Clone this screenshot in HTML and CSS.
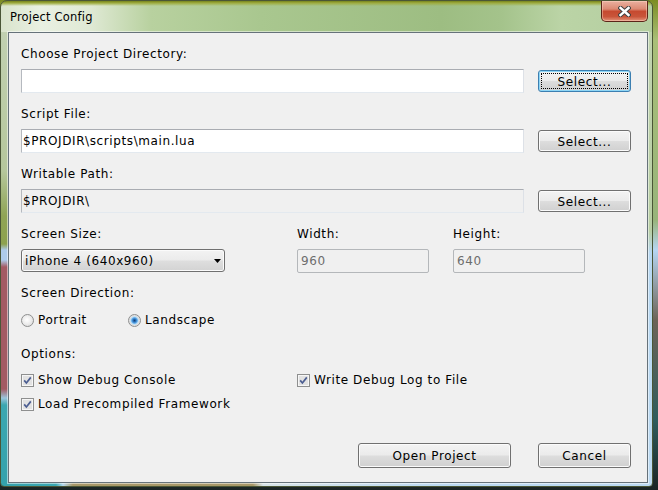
FILE: index.html
```
<!DOCTYPE html>
<html lang="en">
<head>
<meta charset="UTF-8">
<title>Project Config</title>
<link rel="stylesheet" href="styles.css">
</head>
<body>
    <div class="window">
        <div class="titlebar">
            <span class="title">Project Config</span>
            <button class="close-btn" type="button">
                <svg width="13" height="11" viewBox="0 0 13 11">
                    <path d="M2.5 2 L10.5 9 M10.5 2 L2.5 9" stroke="#404040" stroke-width="4.4" stroke-linecap="square"/>
                    <path d="M2.5 2 L10.5 9 M10.5 2 L2.5 9" stroke="#ffffff" stroke-width="2.4" stroke-linecap="square"/>
                </svg>
            </button>
        </div>
        <div class="client">
            <div class="field">
                <div class="label">Choose Project Directory:</div>
                <div class="path-row">
                    <input class="text-box" type="text" value="">
                    <button class="btn btn-default" type="button">Select...</button>
                </div>
            </div>
            <div class="field">
                <div class="label">Script File:</div>
                <div class="path-row">
                    <input class="text-box" type="text" value="$PROJDIR\scripts\main.lua">
                    <button class="btn" type="button">Select...</button>
                </div>
            </div>
            <div class="field">
                <div class="label">Writable Path:</div>
                <div class="path-row">
                    <input class="text-box read-only" type="text" value="$PROJDIR\" readonly>
                    <button class="btn" type="button">Select...</button>
                </div>
            </div>

            <div class="size-grid">
                <div class="label">Screen Size:</div>
                <div class="label">Width:</div>
                <div class="label">Height:</div>
                <div class="combo">
                    <span>iPhone 4 (640x960)</span>
                    <svg width="7" height="4" viewBox="0 0 7 4"><path d="M0 0 H7 L3.5 4 Z" fill="#000"/></svg>
                </div>
                <input class="num-box" type="text" value="960" disabled>
                <input class="num-box" type="text" value="640" disabled>
            </div>

            <div class="label">Screen Direction:</div>
            <div class="radio-row">
                <div class="radio-option"><span class="radio"></span>Portrait</div>
                <div class="radio-option"><span class="radio checked"></span>Landscape</div>
            </div>

            <div class="label options-label">Options:</div>
            <div class="options-grid">
                <div class="check-option">
                    <svg class="check" width="13" height="13" viewBox="0 0 13 13">
                        <rect x="0.5" y="0.5" width="12" height="12" fill="#f6f6f6" stroke="#8e8f8f"/>
                        <rect x="2" y="2" width="9" height="9" fill="#e2e2e2"/>
                        <path d="M3.2 6.4 L5.4 9 L9.8 3.4" fill="none" stroke="#4c5e92" stroke-width="1.7"/>
                    </svg>
                    Show Debug Console
                </div>
                <div class="check-option">
                    <svg class="check" width="13" height="13" viewBox="0 0 13 13">
                        <rect x="0.5" y="0.5" width="12" height="12" fill="#f6f6f6" stroke="#8e8f8f"/>
                        <rect x="2" y="2" width="9" height="9" fill="#e2e2e2"/>
                        <path d="M3.2 6.4 L5.4 9 L9.8 3.4" fill="none" stroke="#4c5e92" stroke-width="1.7"/>
                    </svg>
                    Write Debug Log to File
                </div>
                <div class="check-option">
                    <svg class="check" width="13" height="13" viewBox="0 0 13 13">
                        <rect x="0.5" y="0.5" width="12" height="12" fill="#f6f6f6" stroke="#8e8f8f"/>
                        <rect x="2" y="2" width="9" height="9" fill="#e2e2e2"/>
                        <path d="M3.2 6.4 L5.4 9 L9.8 3.4" fill="none" stroke="#4c5e92" stroke-width="1.7"/>
                    </svg>
                    Load Precompiled Framework
                </div>
            </div>

            <div class="actions">
                <button class="btn btn-large btn-open" type="button">Open Project</button>
                <button class="btn btn-large" type="button">Cancel</button>
            </div>
        </div>
    </div>
</body>
</html>
```

FILE: styles.css
```
body {
    margin: 0;
    font-family: "DejaVu Sans", sans-serif;
    font-size: 12px;
    letter-spacing: 0.6px;
    color: #000000;
    background: linear-gradient(to bottom, #7c8c22 0, #a9bf78 40px, #98b47a 220px, #b6d6f2 250px, #6c6458 320px, #2f5c5c 420px, #1a2424 490px);
    height: 490px;
    overflow: hidden;
}
.window {
    width: 653px;
    height: 487px;
    box-sizing: border-box;
    border: 1px solid #4a5636;
    border-radius: 7px 7px 4px 4px;
    padding: 0 4px 3px 7px;
    display: flex;
    flex-direction: column;
    background:
        linear-gradient(to bottom, #76831c 0, #9eac3e 2px, rgba(170, 190, 110, 0) 5px) left top / 100% 6px no-repeat,
        linear-gradient(to right, #d9e4cc 0, #e9f0e2 40px, #dfe9d4 90px, #b8d19f 150px, #a9c78f 260px, #9dbd82 440px, #a4c38b 500px, #bbd4a6 560px, #b4cea0 651px) left top / 100% 31px no-repeat,
        linear-gradient(to bottom, #c4d3b6 0, #b5c79c 170px, #8fa455 215px, #8da24e 243px, #aecbea 249px, #aecbea 259px, #a35a63 266px, #a35a63 388px, #9cc4dc 397px, #3ba7b0 404px, #34a2ac 487px) left top / 8px 100% no-repeat,
        linear-gradient(to bottom, #c2d5b2 0, #b9cfa4 230px, #b8d8f2 252px, #bcdaf2 487px) right top / 5px 100% no-repeat,
        linear-gradient(to right, #36a2ac 0, #3aa8b2 55px, #b6d8ee 62px, #a89868 72px, #a89868 252px, #d8e4e8 262px, #bcdaf2 440px, #bcdaf2 653px) left bottom / 100% 4px no-repeat;
}
.titlebar {
    height: 31px;
    display: flex;
    align-items: flex-start;
    flex-shrink: 0;
}
.title {
    font-size: 11.5px;
    letter-spacing: 0.2px;
    line-height: 14px;
    padding: 9px 0 0 2px;
}
.close-btn {
    margin-left: auto;
    width: 47px;
    height: 21px;
    padding: 0;
    border: 1px solid #5b2418;
    border-top: none;
    border-radius: 0 0 5px 5px;
    background: linear-gradient(to bottom, #eab0a0 0, #dc8a74 40%, #c64a30 52%, #c9553a 78%, #e3937a 100%);
    box-shadow: inset 0 0 0 1px rgba(255, 220, 200, 0.45);
    display: flex;
    align-items: center;
    justify-content: center;
}
.client {
    flex: 1;
    background-color: #f0f0f0;
    border: 1px solid #66727a;
    box-shadow: 0 0 0 1px rgba(255, 255, 255, 0.5);
    padding: 13px 16px 0 12px;
    display: flex;
    flex-direction: column;
}
.label {
    height: 16px;
    line-height: 16px;
    white-space: nowrap;
}
.field {
    margin-bottom: 13px;
}
.path-row {
    display: flex;
    align-items: center;
    gap: 14px;
    height: 24px;
    margin-top: 7px;
}
input {
    font: inherit;
    letter-spacing: inherit;
    outline: none;
    margin: 0;
}
.text-box {
    flex: 1;
    min-width: 0;
    height: 24px;
    box-sizing: border-box;
    border: 1px solid;
    border-color: #a9acb2 #dde1e7 #e3e9ef #b5b9bf;
    background-color: #ffffff;
    padding: 0 1px;
    color: #000000;
}
.text-box.read-only {
    background-color: #f0f0f0;
}
.btn {
    font: inherit;
    letter-spacing: inherit;
    color: #000000;
    width: 93px;
    height: 22px;
    padding: 1px 0 0;
    box-sizing: border-box;
    border: 1px solid #707070;
    border-radius: 3px;
    background: linear-gradient(to bottom, #f3f3f3 0, #ebebeb 48%, #dddddd 52%, #d0d0d0 100%);
    box-shadow: inset 0 0 0 1px #fbfbfb;
    position: relative;
    flex-shrink: 0;
}
.btn-default {
    border-color: #3c7fb1;
    box-shadow: inset 0 0 0 1px #8ed6f6;
}
.btn-default::after {
    content: "";
    position: absolute;
    top: 2px;
    left: 2px;
    right: 2px;
    bottom: 2px;
    border: 1px dotted #000000;
}
.btn-large {
    height: 25px;
}
.btn-open {
    width: 153px;
}
.size-grid {
    display: grid;
    grid-template-columns: 276px 156px 132px;
    grid-template-rows: 16px 24px;
    row-gap: 7px;
    align-items: start;
    margin-bottom: 12px;
}
.combo {
    width: 204px;
    height: 23px;
    box-sizing: border-box;
    border: 1px solid #707070;
    border-radius: 3px;
    background: linear-gradient(to bottom, #f3f3f3 0, #ebebeb 48%, #dedede 52%, #d3d3d3 100%);
    box-shadow: inset 0 0 0 1px #fbfbfb;
    display: flex;
    align-items: center;
    justify-content: space-between;
    padding: 0 3px 0 3px;
    white-space: nowrap;
}
.num-box {
    width: 132px;
    height: 24px;
    box-sizing: border-box;
    border: 1px solid #b4b7ba;
    border-radius: 2px;
    background-color: #f0f0f0;
    color: #6d6d6d;
    padding: 0 3px;
}
.radio-row {
    display: flex;
    height: 16px;
    line-height: 16px;
    margin-top: 11px;
}
.radio-option {
    display: flex;
    align-items: center;
    gap: 4px;
    width: 107px;
    white-space: nowrap;
}
.radio {
    width: 13px;
    height: 13px;
    box-sizing: border-box;
    border-radius: 50%;
    border: 1px solid #8e8f8f;
    background: radial-gradient(circle at 45% 45%, #ffffff 0, #f0f0f0 40%, #d4d4d4 100%);
}
.radio.checked {
    background: radial-gradient(circle at 50% 50%, #123e70 0, #2d76c2 1.6px, #6fb6ee 3px, #bfe0f8 3.8px, #dedede 4.6px, #f4f4f4 100%);
}
.options-label {
    margin-top: 18px;
}
.options-grid {
    display: grid;
    grid-template-columns: 276px auto;
    grid-auto-rows: 16px;
    row-gap: 8px;
    margin-top: 10px;
}
.check-option {
    display: flex;
    align-items: center;
    gap: 4px;
    line-height: 16px;
    white-space: nowrap;
}
.check {
    flex-shrink: 0;
}
.actions {
    display: flex;
    justify-content: flex-end;
    gap: 27px;
    margin-top: 31px;
}
```
